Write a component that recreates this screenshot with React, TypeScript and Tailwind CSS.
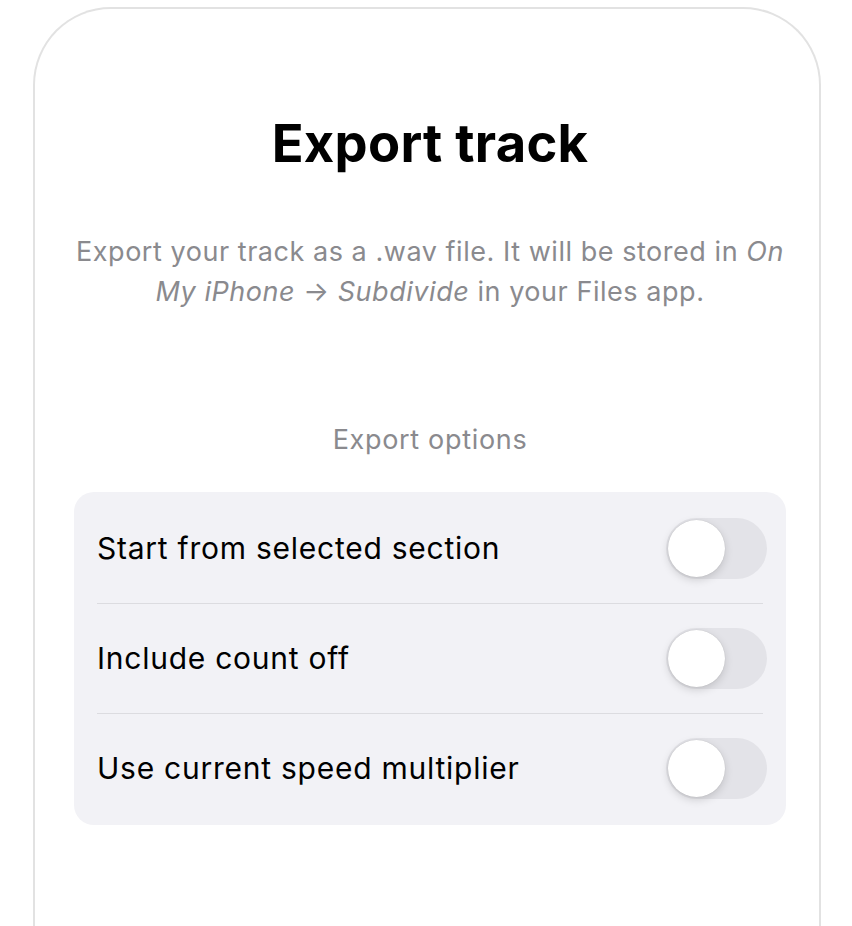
import { useState } from "react";

const options = [
  { id: "section", label: "Start from selected section" },
  { id: "countoff", label: "Include count off" },
  { id: "speed", label: "Use current speed multiplier" },
];

function Toggle({ on, onChange }: { on: boolean; onChange: () => void }) {
  return (
    <button
      type="button"
      onClick={onChange}
      className={`relative h-[61px] w-[101px] shrink-0 rounded-full transition-colors ${
        on ? "bg-[#34c759]" : "bg-[#e3e3e8]"
      }`}
    >
      <span
        className={`absolute top-[2px] h-[57px] w-[57px] rounded-full bg-white shadow-[0_3px_8px_rgba(0,0,0,0.15),0_0_1px_rgba(0,0,0,0.2)] transition-all ${
          on ? "left-[42px]" : "left-[2px]"
        }`}
      />
    </button>
  );
}

export default function App() {
  const [state, setState] = useState<Record<string, boolean>>({});

  return (
    <div
      className="h-screen overflow-hidden bg-white pt-[7px] pr-[31px] pl-[33px]"
      style={{ fontFamily: "Inter, 'Noto Sans', sans-serif" }}
    >
      <div className="h-[1000px] rounded-t-[78px] border-2 border-b-0 border-[#e2e2e2] pt-[104px] pr-[33px] pl-[39px]">
        <h1 className="text-center text-[52.5px] leading-[60px] font-bold tracking-[0.005em] text-black">
          Export track
        </h1>

        <p className="mt-[59px] text-center text-[27px] leading-[40px] tracking-[0.02em] text-[#8a8a8e]">
          Export your track as a .wav file. It will be stored in <em>On My iPhone</em> → <em>Subdivide</em> in your
          Files app.
        </p>

        <div className="mt-[108px] text-center text-[27px] leading-[40px] tracking-[0.025em] text-[#8a8a8e]">
          Export options
        </div>

        <div className="mt-[32px] rounded-[20px] bg-[#f2f2f6] py-[2px] pl-[23px]">
          {options.map((o, i) => (
            <div key={o.id}>
              {i > 0 && <div className="mr-[23px] h-px bg-[#dcdce0]" />}
              <div className="flex h-[109px] items-center justify-between pr-[19px]">
                <span className="text-[30px] tracking-[0.025em] text-black">{o.label}</span>
                <Toggle
                  on={!!state[o.id]}
                  onChange={() => setState((s) => ({ ...s, [o.id]: !s[o.id] }))}
                />
              </div>
            </div>
          ))}
        </div>
      </div>
    </div>
  );
}
